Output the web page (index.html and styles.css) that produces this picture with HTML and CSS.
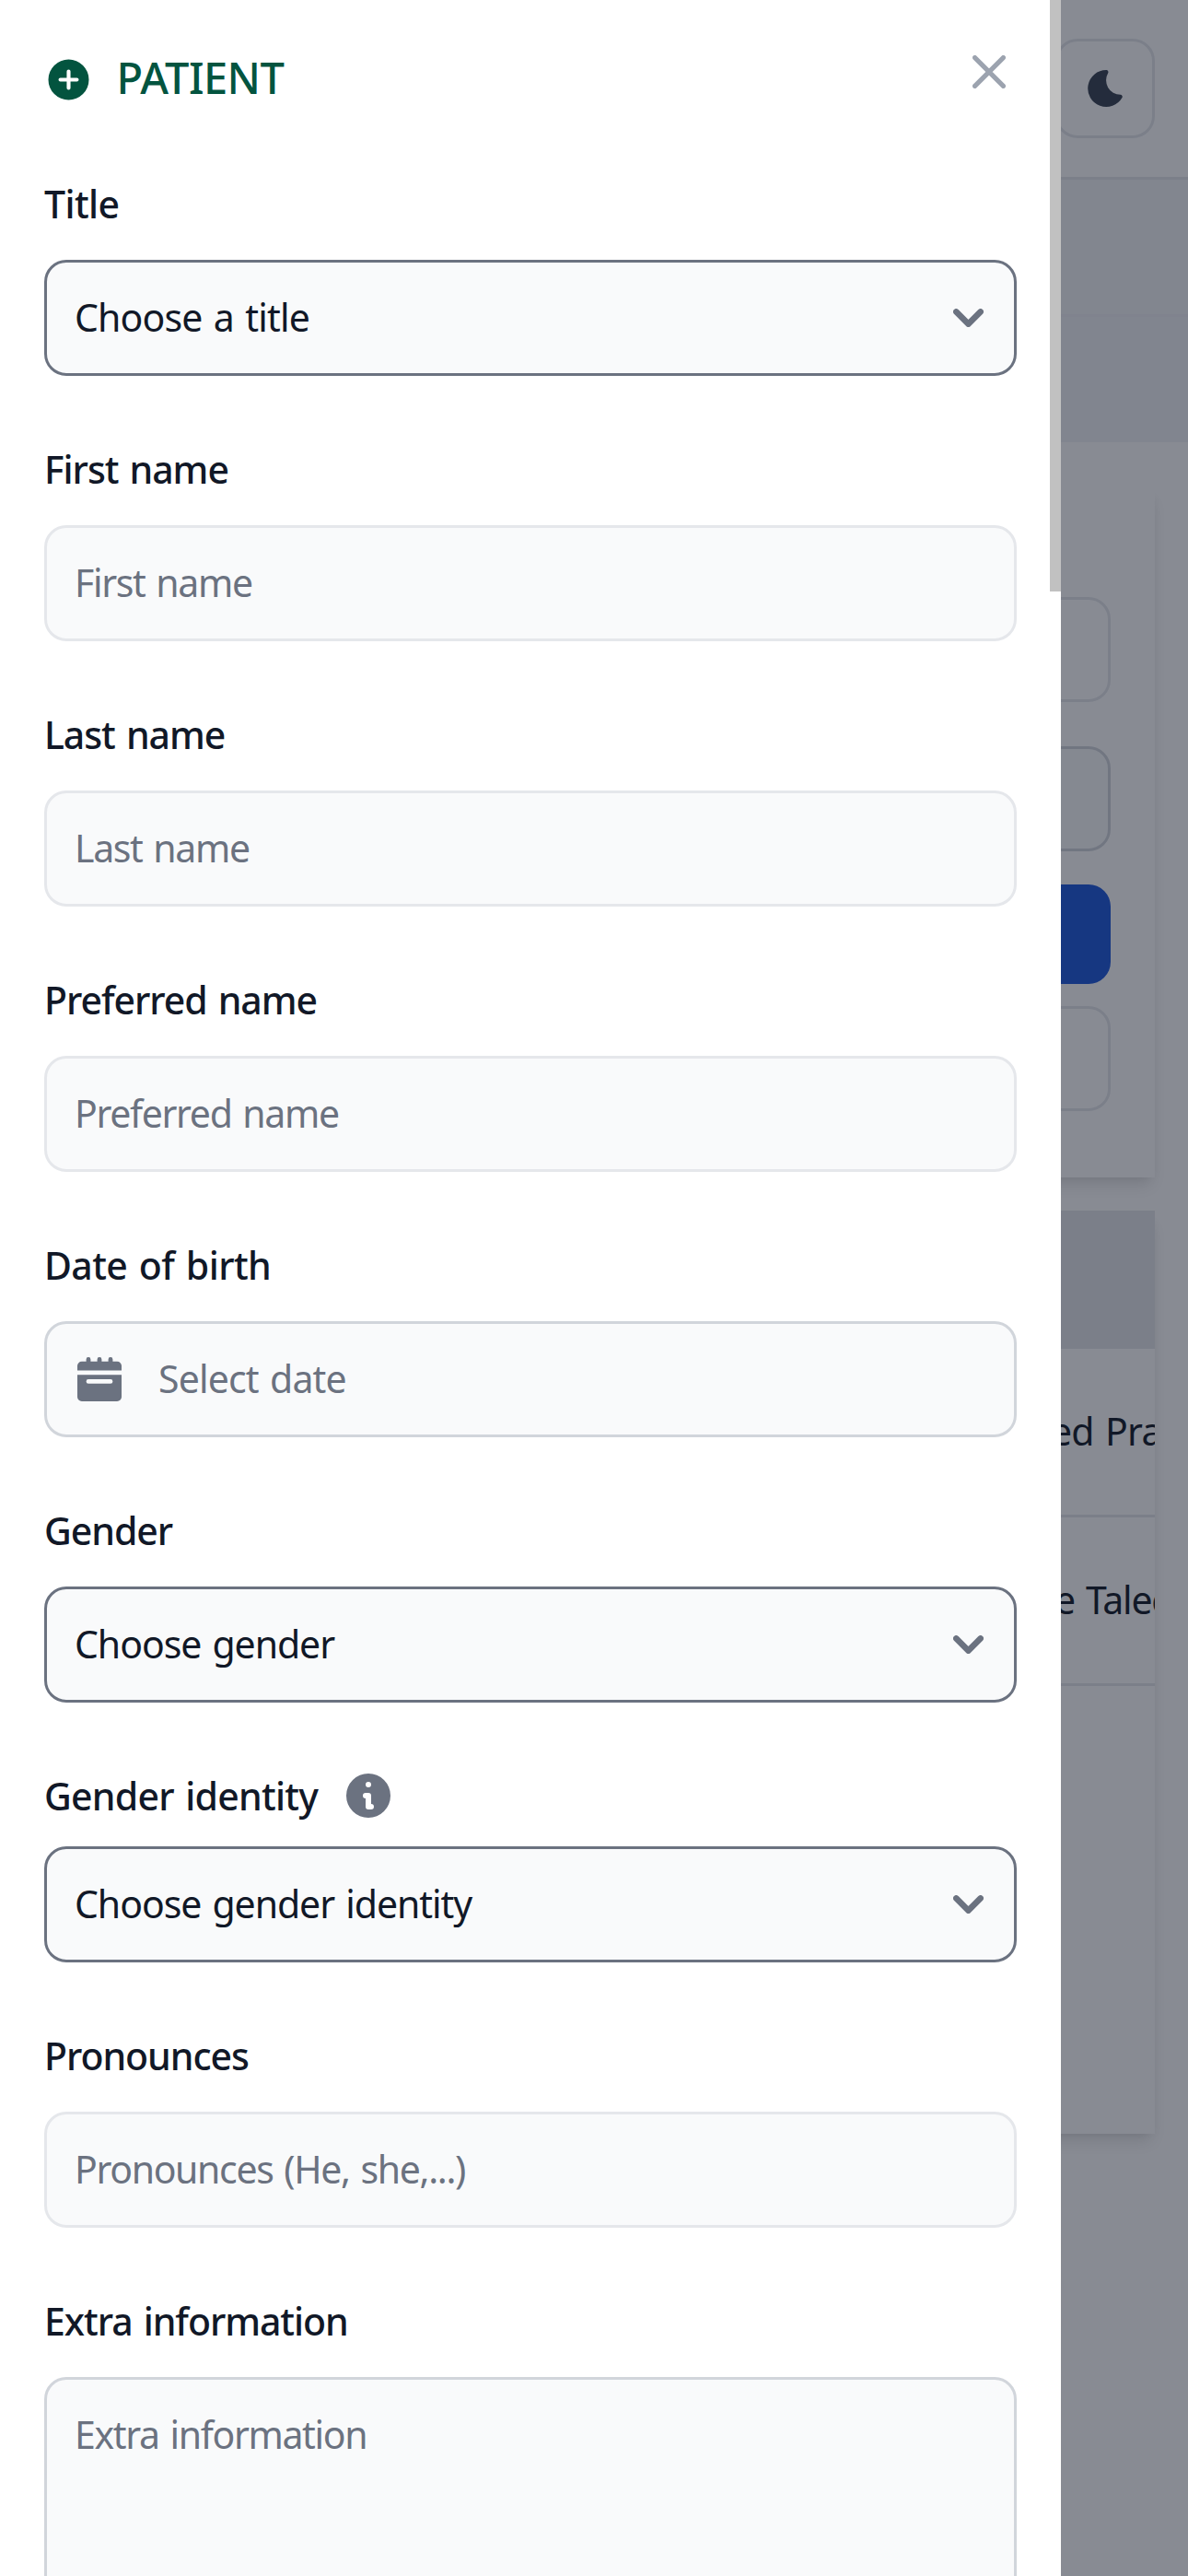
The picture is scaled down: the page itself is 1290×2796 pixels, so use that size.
FILE: index.html
```html
<!DOCTYPE html>
<html lang="en">
<head>
<meta charset="utf-8">
<title>Patient</title>
<link rel="stylesheet" href="styles.css">
</head>
<body>
<div class="app">
  <header class="topbar">
    <button class="theme-toggle" type="button" aria-label="Toggle dark mode">
      <svg class="icon-moon" viewBox="0 0 18 20" fill="currentColor"><path d="M17.8 13.75a1 1 0 0 0-.859-.5A7.488 7.488 0 0 1 10.52 2a1 1 0 0 0 0-.969A1.035 1.035 0 0 0 9.687.5h-.113a9.5 9.5 0 1 0 8.222 14.247 1 1 0 0 0 .004-.997Z"/></svg>
    </button>
  </header>
  <div class="band band-upper"></div>
  <div class="band band-lower"></div>
  <main class="content">
    <section class="card filters">
      <div class="control"></div>
      <div class="control control-select"></div>
      <div class="control control-primary"></div>
      <div class="control"></div>
    </section>
    <section class="card table">
      <div class="table-head"></div>
      <div class="table-row row-first"><span>ed Prac</span></div>
      <div class="table-row row-second"><span>e Talec</span></div>
    </section>
  </main>
</div>
<div class="backdrop"></div>
<aside class="drawer">
  <div class="drawer-body">
    <div class="drawer-head">
      <svg class="icon-plus" viewBox="0 0 20 20" fill="currentColor"><path fill-rule="evenodd" d="M10 18a8 8 0 1 0 0-16 8 8 0 0 0 0 16Zm.75-11.25a.75.75 0 0 0-1.5 0v2.5h-2.5a.75.75 0 0 0 0 1.5h2.5v2.5a.75.75 0 0 0 1.5 0v-2.5h2.5a.75.75 0 0 0 0-1.5h-2.5v-2.5Z"/></svg>
      <h5 class="drawer-title">PATIENT</h5>
      <svg class="icon-close" viewBox="0 0 14 14" fill="none" stroke="currentColor" stroke-width="2" stroke-linecap="round"><path d="m1 1 12 12M13 1 1 13"/></svg>
    </div>
    <form class="form">
      <div class="field">
        <div class="label l-loose">Title</div>
        <div class="input select"><span class="t-loose">Choose a title</span><svg class="chevron" viewBox="0 0 10 6"><path d="m1 1 4 4 4-4"/></svg></div>
      </div>
      <div class="field">
        <div class="label">First name</div>
        <div class="input"><span>First name</span></div>
      </div>
      <div class="field">
        <div class="label">Last name</div>
        <div class="input"><span>Last name</span></div>
      </div>
      <div class="field">
        <div class="label">Preferred name</div>
        <div class="input"><span>Preferred name</span></div>
      </div>
      <div class="field">
        <div class="label l-loose">Date of birth</div>
        <div class="input outlined date"><svg class="icon-calendar" viewBox="0 0 20 20" fill="currentColor"><path d="M20 4a2 2 0 0 0-2-2h-2V1a1 1 0 0 0-2 0v1h-3V1a1 1 0 0 0-2 0v1H6V1a1 1 0 0 0-2 0v1H2a2 2 0 0 0-2 2v2h20V4ZM0 18a2 2 0 0 0 2 2h16a2 2 0 0 0 2-2V8H0v10Zm5-8h10a1 1 0 0 1 0 2H5a1 1 0 0 1 0-2Z"/></svg><span class="t-loose">Select date</span></div>
      </div>
      <div class="field">
        <div class="label">Gender</div>
        <div class="input select"><span class="t-mid">Choose gender</span><svg class="chevron" viewBox="0 0 10 6"><path d="m1 1 4 4 4-4"/></svg></div>
      </div>
      <div class="field field-tight">
        <div class="label l-mid">Gender identity<svg class="icon-info" viewBox="0 0 20 20" fill="currentColor"><path fill-rule="evenodd" d="M18 10a8 8 0 1 1-16 0 8 8 0 0 1 16 0Zm-7-4a1 1 0 1 1-2 0 1 1 0 0 1 2 0ZM9 9a1 1 0 0 0 0 2v3a1 1 0 0 0 1 1h1a1 1 0 1 0 0-2v-3a1 1 0 0 0-1-1H9Z"/></svg></div>
        <div class="input select"><span class="t-mid">Choose gender identity</span><svg class="chevron" viewBox="0 0 10 6"><path d="m1 1 4 4 4-4"/></svg></div>
      </div>
      <div class="field">
        <div class="label">Pronounces</div>
        <div class="input"><span>Pronounces (He, she,...)</span></div>
      </div>
      <div class="field">
        <div class="label">Extra information</div>
        <div class="input outlined textarea"><span>Extra information</span></div>
      </div>
    </form>
  </div>
  <div class="scrollbar"><div class="scroll-thumb"></div></div>
</aside>
</body>
</html>
```
FILE: styles.css
```css
* { box-sizing: border-box; }
html, body { margin: 0; height: 2796px; overflow: hidden; }
body {
  position: relative;
  background: #fff;
  color: #111827;
  font: 400 41px/60px "Noto Sans", sans-serif;
  word-spacing: 2.5px;
}
svg { display: block; flex: none; }

/* page behind the drawer */
.topbar {
  display: flex;
  justify-content: flex-end;
  height: 195px;
  padding: 42px 36px 0;
  border-bottom: 3px solid #e5e7eb;
}
.theme-toggle {
  display: flex;
  align-items: center;
  justify-content: center;
  width: 108px;
  height: 108px;
  padding: 0;
  border: 3px solid #e5e7eb;
  border-radius: 24px;
  background: none;
  color: #374151;
}
.icon-moon { width: 38px; height: 42px; }
.band-upper { height: 146px; background: #f3f4f6; }
.band-lower { height: 139px; border-top: 3px solid #efeff4; background: #f1f2f6; }
.content {
  display: flex;
  flex-direction: column;
  gap: 36px;
  padding: 48px 36px;
}
.card {
  background: #fff;
  box-shadow: 0 12px 18px -3px rgb(0 0 0 / .1), 0 6px 12px -6px rgb(0 0 0 / .1);
}
.filters {
  display: flex;
  flex-direction: column;
  height: 750px;
  padding: 120px 48px 0;
}
.control {
  height: 114px;
  margin-bottom: 48px;
  border: 3px solid #e5e7eb;
  border-radius: 24px;
}
.control-select { margin-bottom: 36px; border-color: #d1d5db; background: #f9fafb; }
.control-primary { height: 108px; margin-bottom: 24px; border: 0; background: #1a56db; }
.table { height: 1002px; overflow: hidden; }
.table-head { height: 150px; background: #e5e7eb; }
.table-row {
  height: 183px;
  padding-top: 59px;
  border-bottom: 3px solid #e5e7eb;
  white-space: nowrap;
}
.row-first { padding-left: 1105px; letter-spacing: -.8px; }
.row-second { padding-left: 1109px; letter-spacing: -1.2px; }
.backdrop {
  position: absolute;
  inset: 0;
  background: rgb(17 24 39 / .5);
}

/* drawer */
.drawer {
  position: absolute;
  top: 0;
  bottom: 0;
  left: 0;
  display: flex;
  width: 1152px;
  overflow: hidden;
  background: #fff;
}
.drawer-body { flex: 1; padding: 0 36px 0 48px; }
.scrollbar { width: 12px; }
.scroll-thumb { height: 642px; background: #c1c1c1; }
.drawer-head {
  display: flex;
  align-items: flex-start;
  height: 191px;
  color: #03543f;
}
.icon-plus { width: 55px; height: 55px; margin: 58.5px 0 0 -1.5px; }
.drawer-title {
  flex: 1;
  margin: 54px 0 0 25px;
  font-size: 47px;
  font-weight: 500;
  letter-spacing: -.6px;
}
.icon-close { width: 36px; height: 36px; margin: 60px 12px 0 0; color: #9ca3af; }
.form { display: flex; flex-direction: column; gap: 71px; }
.field { display: flex; flex-direction: column; gap: 31px; }
.field-tight { gap: 25px; }
.label {
  display: flex;
  align-items: center;
  height: 60px;
  font-weight: 500;
  letter-spacing: -1.05px;
}
.l-mid { letter-spacing: -.75px; }
.l-loose { letter-spacing: -.6px; }
.icon-info { width: 60px; height: 60px; margin-left: 25px; color: #6b7280; }
.input {
  display: flex;
  align-items: center;
  height: 126px;
  padding: 0 30px 2px;
  border: 3px solid #e5e7eb;
  border-radius: 24px;
  background: #f9fafb;
  color: #6b7280;
  letter-spacing: -1.35px;
}
.outlined { border-color: #d1d5db; }
.select { justify-content: space-between; border-color: #6b7280; color: #111827; }
.t-mid { letter-spacing: -1.05px; }
.t-loose { letter-spacing: -.85px; }
.chevron {
  width: 33px;
  height: 20px;
  margin: 2px 3px 0 0;
  fill: none;
  stroke: #6b7280;
  stroke-width: 2;
  stroke-linecap: round;
  stroke-linejoin: round;
}
.date { gap: 40px; padding-left: 33px; }
.icon-calendar { width: 48px; height: 48px; margin-top: 2px; }
.textarea { height: 300px; align-items: flex-start; padding-top: 29px; }
```
